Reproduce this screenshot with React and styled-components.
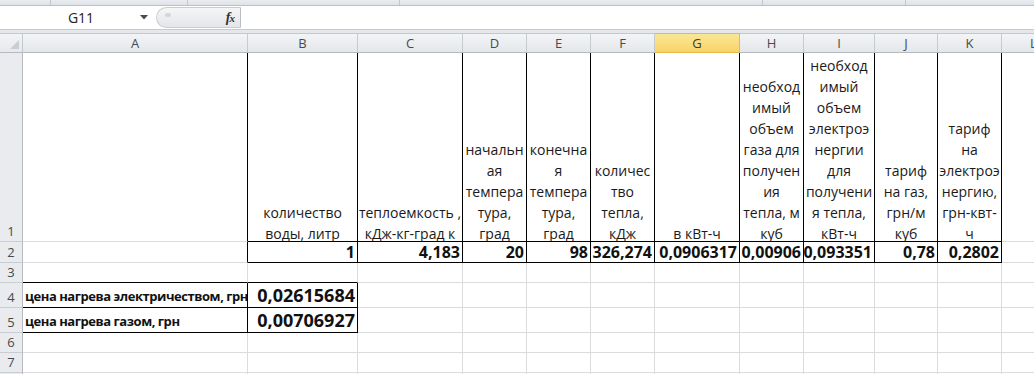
import React from 'react';
import styled, { createGlobalStyle } from 'styled-components';

const GlobalStyle = createGlobalStyle`
  html, body {
    margin: 0;
    padding: 0;
    background: #ffffff;
    overflow: hidden;
  }
  body {
    font-family: 'Open Sans', 'Liberation Sans', sans-serif;
  }
`;

const COLUMNS = [
  { key: 'A', width: 225 },
  { key: 'B', width: 110 },
  { key: 'C', width: 105 },
  { key: 'D', width: 64 },
  { key: 'E', width: 64 },
  { key: 'F', width: 64 },
  { key: 'G', width: 85 },
  { key: 'H', width: 64 },
  { key: 'I', width: 71 },
  { key: 'J', width: 63 },
  { key: 'K', width: 64 },
  { key: 'L', width: 64 },
];

const ROW_HEIGHTS = [189, 21, 20, 25, 25, 20, 20, 20];

const HEADERS = {
  B: ['количество', 'воды, литр'],
  C: ['теплоемкость ,', 'кДж-кг-град к'],
  D: ['начальн', 'ая', 'темпера', 'тура,', 'град'],
  E: ['конечна', 'я', 'темпера', 'тура,', 'град'],
  F: ['количес', 'тво', 'тепла,', 'кДж'],
  G: ['в кВт-ч'],
  H: ['необход', 'имый', 'объем', 'газа для', 'получен', 'ия', 'тепла, м', 'куб'],
  I: ['необход', 'имый', 'объем', 'электроэ', 'нергии', 'для', 'получени', 'я тепла,', 'кВт-ч'],
  J: ['тариф', 'на газ,', 'грн/м', 'куб'],
  K: ['тариф', 'на', 'электроэ', 'нергию,', 'грн-квт-', 'ч'],
};

const VALUES = {
  B: '1',
  C: '4,183',
  D: '20',
  E: '98',
  F: '326,274',
  G: '0,0906317',
  H: '0,00906',
  I: '0,093351',
  J: '0,78',
  K: '0,2802',
};

const COSTS = [
  { row: 4, label: 'цена нагрева электричеством, грн', value: '0,02615684' },
  { row: 5, label: 'цена нагрева газом, грн', value: '0,00706927' },
];

const inTable = (col) => col >= 1 && col <= 10;

const cellBorders = (row, col) => {
  const right =
    ((row === 1 || row === 2) && col <= 10) ||
    ((row === 4 || row === 5) && col <= 1);
  const bottom =
    ((row === 1 || row === 2) && inTable(col)) ||
    ((row >= 3 && row <= 5) && col <= 1);
  return { right, bottom };
};

// what goes in a cell: kind picks the text style
const renderContent = (row, col) => {
  const key = COLUMNS[col].key;
  if (row === 1 && HEADERS[key]) {
    return {
      kind: 'header',
      body: HEADERS[key].map((line, i) => <Line key={i}>{line}</Line>),
    };
  }
  if (row === 2 && VALUES[key]) {
    return { kind: 'value', body: VALUES[key] };
  }
  const cost = COSTS.find((c) => c.row === row);
  if (cost && col === 0) {
    return { kind: 'label', body: cost.label };
  }
  if (cost && col === 1) {
    return { kind: 'total', body: cost.value };
  }
  return null;
};

const App = () => {
  const rows = ROW_HEIGHTS.map((_, i) => i + 1);

  return (
    <Page>
      <GlobalStyle />
      <RibbonEdge>
        <RibbonGroup $w={50} />
        <RibbonGroup $w={136} />
        <RibbonGroup $w={211} />
        <RibbonGroup $w={362} />
        <RibbonGroup $w={142} />
      </RibbonEdge>

      <FormulaBar>
        <NameBox>
          <NameText>G11</NameText>
          <svg width="8" height="5" viewBox="0 0 8 5">
            <polygon points="0,0 8,0 4,4.5" fill="#4a4a4a" />
          </svg>
        </NameBox>
        <FxCapsule>
          <Knob />
          <Fx>
            f<small>x</small>
          </Fx>
        </FxCapsule>
        <FormulaInput />
      </FormulaBar>
      <BarGap />

      <Sheet>
        <Corner>
          <svg width="9" height="9" viewBox="0 0 9 9">
            <polygon points="9,0 9,9 0,9" fill="#c9ccd1" />
          </svg>
        </Corner>
        {COLUMNS.map((c) => (
          <ColHeader key={c.key} $selected={c.key === 'G'}>
            {c.key}
          </ColHeader>
        ))}

        {rows.map((row) => (
          <React.Fragment key={row}>
            <RowHeader>{row}</RowHeader>
            {COLUMNS.map((c, col) => {
              const { right, bottom } = cellBorders(row, col);
              const content = renderContent(row, col);
              return (
                <Cell
                  key={c.key}
                  $right={right}
                  $bottom={bottom}
                  $kind={content ? content.kind : 'empty'}
                >
                  {content && content.body}
                </Cell>
              );
            })}
          </React.Fragment>
        ))}
      </Sheet>
    </Page>
  );
};

export default App;

// Styles
const KIND = {
  empty: { align: 'flex-start', size: '14px', weight: 400, lh: '18px', ls: '0', pb: '1px' },
  header: { align: 'center', size: '14px', weight: 400, lh: '21px', ls: '0', pb: '0' },
  value: { align: 'flex-end', size: '16px', weight: 700, lh: '19px', ls: '0', pb: '0' },
  label: { align: 'flex-start', size: '13px', weight: 700, lh: '20px', ls: '-0.45px', pb: '1px' },
  total: { align: 'flex-end', size: '18px', weight: 700, lh: '23px', ls: '0', pb: '0' },
};

const Page = styled.div`
  width: 1034px;
  height: 374px;
  overflow: hidden;
  background: #ffffff;
`;

const RibbonEdge = styled.div`
  display: flex;
  height: 5px;
  background: linear-gradient(#e9ecf0, #dfe3e8);
  border-bottom: 1px solid #b9c0c8;
`;

const RibbonGroup = styled.div`
  width: ${({ $w }) => $w}px;
  height: 100%;
  border-right: 1px solid #c3c8ce;
`;

const FormulaBar = styled.div`
  display: flex;
  align-items: stretch;
  height: 23px;
  background: #ffffff;
  border-bottom: 1px solid #c6cbd1;
`;

const NameBox = styled.div`
  width: 156px;
  display: flex;
  align-items: center;
  padding-right: 8px;
  box-sizing: border-box;
`;

const NameText = styled.span`
  flex: 1;
  text-align: center;
  padding-left: 22px;
  font-size: 14px;
  color: #222;
`;

const FxCapsule = styled.div`
  width: 85px;
  margin: 1px 0;
  display: flex;
  align-items: center;
  justify-content: space-between;
  padding: 0 6px 0 8px;
  box-sizing: border-box;
  background: linear-gradient(#f4f5f7, #e3e6ea);
  border: 1px solid #c9cdd2;
  border-right: 1px solid #b9bec4;
  border-radius: 11px 0 0 11px;
`;

const Knob = styled.div`
  width: 6px;
  height: 4px;
  margin-top: -6px;
  border-radius: 50%;
  background: #d2d6db;
`;

const Fx = styled.i`
  font-family: 'Liberation Serif', serif;
  font-weight: bold;
  font-size: 14px;
  color: #333;
  letter-spacing: -1px;

  small {
    font-size: 11px;
  }
`;

const FormulaInput = styled.div`
  flex: 1;
  background: #ffffff;
`;

const BarGap = styled.div`
  height: 3px;
  background: #e4e7eb;
`;

const Sheet = styled.div`
  display: grid;
  grid-template-columns: 23px ${COLUMNS.map((c) => `${c.width}px`).join(' ')};
  grid-template-rows: 20px ${ROW_HEIGHTS.map((h) => `${h}px`).join(' ')};
  width: 1066px;
`;

const Corner = styled.div`
  box-sizing: border-box;
  display: flex;
  align-items: flex-end;
  justify-content: flex-end;
  padding: 0 3px 3px 0;
  background: linear-gradient(#f3f4f6, #e6e8eb);
  border-top: 1px solid #c3c8ce;
  border-right: 1px solid #c3c8ce;
  border-bottom: 1px solid #b5bac0;
`;

const ColHeader = styled.div`
  box-sizing: border-box;
  display: flex;
  align-items: center;
  justify-content: center;
  font-size: 13px;
  color: ${({ $selected }) => ($selected ? '#3a3a3a' : '#4a4a4a')};
  background: ${({ $selected }) =>
    $selected
      ? 'linear-gradient(#fbe697, #f8d466)'
      : 'linear-gradient(#f3f4f6, #e4e7ea)'};
  border-top: 1px solid ${({ $selected }) => ($selected ? '#e8b94a' : '#c3c8ce')};
  border-right: 1px solid ${({ $selected }) => ($selected ? '#e8b94a' : '#c7cbd0')};
  border-bottom: 1px solid ${({ $selected }) => ($selected ? '#e8b94a' : '#b5bac0')};
`;

const RowHeader = styled.div`
  box-sizing: border-box;
  display: flex;
  align-items: flex-end;
  justify-content: center;
  padding-bottom: 1px;
  font-size: 13px;
  color: #4a4a4a;
  background: #e9ebee;
  border-right: 1px solid #b5bac0;
  border-bottom: 1px solid #c9cdd2;
`;

const Cell = styled.div`
  box-sizing: border-box;
  display: flex;
  flex-direction: column;
  justify-content: flex-end;
  align-items: ${({ $kind }) => KIND[$kind].align};
  padding: 0 2px ${({ $kind }) => KIND[$kind].pb} 2px;
  overflow: hidden;
  white-space: nowrap;
  color: #111;
  font-size: ${({ $kind }) => KIND[$kind].size};
  font-weight: ${({ $kind }) => KIND[$kind].weight};
  line-height: ${({ $kind }) => KIND[$kind].lh};
  letter-spacing: ${({ $kind }) => KIND[$kind].ls};
  border-right: 1px solid ${({ $right }) => ($right ? '#000' : '#dadcdd')};
  border-bottom: 1px solid ${({ $bottom }) => ($bottom ? '#000' : '#dadcdd')};
`;

const Line = styled.div`
  padding-top: 6px;
  line-height: 15px;
  text-align: center;
  color: #1a1a1a;
`;
